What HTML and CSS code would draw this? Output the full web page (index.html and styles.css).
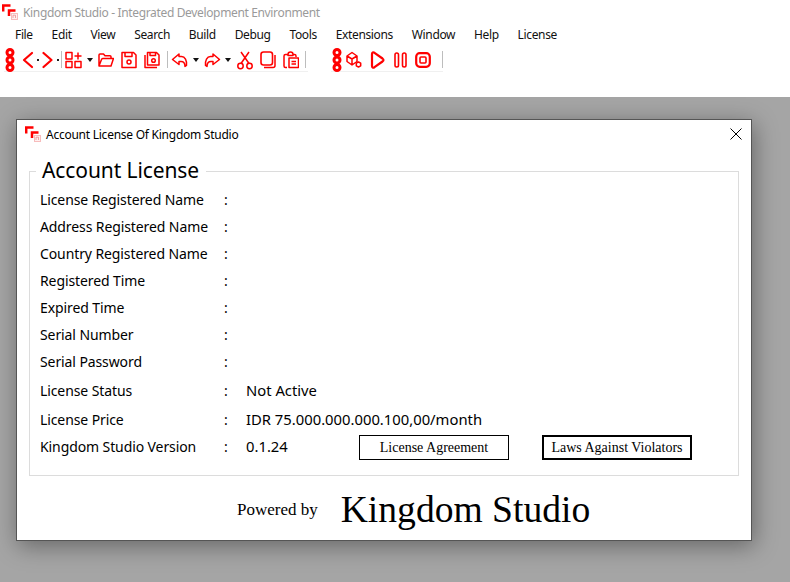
FILE: index.html
```html
<!DOCTYPE html>
<html lang="en">
<head>
<meta charset="utf-8">
<title>Kingdom Studio</title>
<link rel="stylesheet" href="styles.css">
</head>
<body>
<svg class="defs" width="0" height="0" aria-hidden="true">
  <defs>
    <symbol id="logo" viewBox="0 0 16 16">
      <path d="M1.200 7.500V1.600H8.500" fill="none" stroke="#f00" stroke-width="2.500"/>
      <path d="M7 12V6.600H13.500" fill="none" stroke="#f00" stroke-width="2.500"/>
      <rect x="9.500" y="9.500" width="6" height="6" fill="#fff0f0" stroke="#f7bcbc"/>
      <path d="M11 14v-2.800h2.500v2.800" fill="none" stroke="#ec8f8f" stroke-width=".8"/>
    </symbol>
    <symbol id="grip" viewBox="0 0 12 24">
      <g fill="#fff" stroke="#f00" stroke-width="3">
        <circle cx="6" cy="4.500" r="3"/><circle cx="6" cy="12" r="3"/><circle cx="6" cy="19.500" r="3"/>
      </g>
    </symbol>
  </defs>
</svg>
<header class="app">
  <div class="titlebar">
    <svg class="logo" width="16" height="16"><use href="#logo"/></svg>
    <span>Kingdom Studio - Integrated Development Environment</span>
  </div>
  <nav class="menu">
    <span>File</span><span>Edit</span><span>View</span><span>Search</span><span>Build</span><span>Debug</span><span>Tools</span><span>Extensions</span><span>Window</span><span>Help</span><span>License</span>
  </nav>
  <div class="toolbar">
    <div class="tools tools-main">
      <svg class="grip" width="12" height="24"><use href="#grip"/></svg>
      <svg class="ico back" width="12" height="24" viewBox="0 0 12 24"><path d="M10 5L2 12l8 7" class="s"/></svg>
      <i class="dot"></i>
      <svg class="ico fwd" width="12" height="24" viewBox="0 0 12 24"><path d="M1.500 5L9.500 12l-8 7" class="s"/></svg>
      <i class="dot"></i>
      <i class="sep sep-a"></i>
      <svg class="ico grid" width="17" height="24" viewBox="0 0 17 24"><path d="M1 4.500h6v6.500H1zM1 13.500h6v6H1zM10 13.500h6v6h-6zM13 4.500v7M9.500 8H16.500" class="t"/></svg>
      <i class="caret"></i>
      <svg class="ico open" width="16" height="24" viewBox="0 0 16 24"><path d="M1 18V7c0-.7.300-1 1-1h3.500l1.500 1.800h5c.7 0 1 .3 1 1v1.700M1 18l2.500-6.500c.2-.7.500-1 1.200-1H15.500l-2.500 7.500z" class="t"/></svg>
      <svg class="ico save" width="16" height="24" viewBox="0 0 16 24"><path d="M1 4.500h11.500L15 7v12.500H1zM4 4.500v4h7v-4" class="t"/><circle cx="8" cy="14" r="2" class="t"/></svg>
      <svg class="ico saveall" width="16" height="24" viewBox="0 0 16 24"><path d="M3.500 4.500h9L15 7v10H3.500zM1 7v12.500h12M6 4.500v3h5.500v-3" class="t"/><circle cx="9.500" cy="12.500" r="1.800" class="t"/></svg>
      <i class="sep sep-b"></i>
      <svg class="ico undo" width="17" height="24" viewBox="0 0 17 24"><path d="M8 6L1.500 11.500 8 16.500v-3h2c2.500 0 4 1 4 5l1.500-1c.5-5-1.500-9-5-9H8z" class="t"/></svg>
      <i class="caret caret-near"></i>
      <svg class="ico redo" width="17" height="24" viewBox="0 0 17 24"><path d="M9 6l6.500 5.500L9 16.500v-3H7c-2.500 0-4 1-4 5l-1.500-1c-.5-5 1.500-9 5-9H9z" class="t"/></svg>
      <i class="caret caret-far"></i>
      <svg class="ico cut" width="16" height="24" viewBox="0 0 16 24"><path d="M4 4l8 11.500M12 4L4 15.500" class="t"/><circle cx="3.500" cy="18" r="2.700" class="t"/><circle cx="12.500" cy="18" r="2.700" class="t"/></svg>
      <svg class="ico copy" width="16" height="24" viewBox="0 0 16 24"><rect x="1" y="4" width="11.500" height="13" rx="2.500" class="s-thin"/><path d="M15 7v10.500c0 1.500-1 2-2 2H4" class="t"/></svg>
      <svg class="ico paste" width="16" height="24" viewBox="0 0 16 24"><path d="M4 19.500H2.500C1.500 19.500 1 19 1 18V8c0-1 .5-1.500 1.500-1.500H5M10 6.500h1.500c1 0 1.500.5 1.500 1.500v1M5 6.500c0-1.500 1-2.500 2.500-2.500S10 5 10 6.500v1H5zM6 10h9.500v9.500H6zM8.500 13.500h4.500M8.500 16h4.500" class="t"/></svg>
      <i class="sep sep-c"></i>
    </div>
    <div class="tools tools-run">
      <svg class="grip" width="12" height="24"><use href="#grip"/></svg>
      <svg class="ico box" width="16" height="24" viewBox="0 0 16 24"><path d="M1 8l5-3.500L11 8v5.500L6 17l-5-3.500zM1 8l5 3 5-3M6 11v6" class="t"/><path d="M12.500 14l2.200 1.200v2.600L12.500 19l-2.200-1.200v-2.600z" class="t"/></svg>
      <svg class="ico play" width="15" height="24" viewBox="0 0 15 24"><path d="M2 6c0-1.500 1-2 2.500-1.200L12.500 10.500c1.300 1 1.300 2 0 3L4.500 19.200C3 20 2 19.500 2 18z" class="s"/></svg>
      <svg class="ico pause" width="13" height="24" viewBox="0 0 13 24"><rect x="1" y="5" width="3.500" height="14" rx="1.700" class="s-thin"/><rect x="8.500" y="5" width="3.500" height="14" rx="1.700" class="s-thin"/></svg>
      <svg class="ico stop" width="16" height="24" viewBox="0 0 16 24"><rect x="1.200" y="5.200" width="13.600" height="13.600" rx="3.500" class="s"/><rect x="5" y="9" width="6" height="6" rx="1" class="s-thin"/></svg>
      <i class="sep sep-d"></i>
    </div>
  </div>
</header>
<main class="desk">
  <section class="dialog">
    <div class="dialog-title">
      <svg class="logo" width="16" height="16"><use href="#logo"/></svg>
      <span class="dialog-name">Account License Of Kingdom Studio</span>
      <svg class="close" width="12" height="12" viewBox="0 0 12 12"><path d="M.5.500l11 11M11.500.500l-11 11" stroke="#000" fill="none"/></svg>
    </div>
    <fieldset class="license">
      <legend>Account License</legend>
      <div class="row"><span class="key">License Registered Name</span><span class="colon">:</span></div>
      <div class="row"><span class="key">Address Registered Name</span><span class="colon">:</span></div>
      <div class="row"><span class="key">Country Registered Name</span><span class="colon">:</span></div>
      <div class="row"><span class="key">Registered Time</span><span class="colon">:</span></div>
      <div class="row"><span class="key">Expired Time</span><span class="colon">:</span></div>
      <div class="row"><span class="key">Serial Number</span><span class="colon">:</span></div>
      <div class="row"><span class="key">Serial Password</span><span class="colon">:</span></div>
      <div class="row row-tall"><span class="key">License Status</span><span class="colon">:</span><span class="value">Not Active</span></div>
      <div class="row row-tall"><span class="key">License Price</span><span class="colon">:</span><span class="value">IDR 75.000.000.000.100,00/month</span></div>
      <div class="row"><span class="key">Kingdom Studio Version</span><span class="colon">:</span><span class="value version">0.1.24</span>
        <button class="btn" type="button">License Agreement</button>
        <button class="btn btn-focus" type="button">Laws Against Violators</button>
      </div>
    </fieldset>
    <footer class="brand">
      <span class="powered">Powered by</span>
      <span class="brand-name">Kingdom Studio</span>
    </footer>
  </section>
</main>
</body>
</html>
```
FILE: styles.css
```css
* { box-sizing: border-box; }
html, body { margin: 0; height: 100%; }
body {
  width: 790px;
  height: 582px;
  overflow: hidden;
  background: #a5a5a5;
  font-family: "Noto Sans", sans-serif;
  color: #000;
  display: flex;
  flex-direction: column;
}
.defs { position: absolute; }
.app { height: 97px; background: #fff; flex: none; }
.logo { display: block; flex: none; }

.titlebar {
  height: 24px;
  padding-left: 2px;
  display: flex;
  align-items: center;
  gap: 5px;
  font-size: 12px;
  letter-spacing: -.35px;
  color: #9a9a9a;
}
.menu {
  height: 20px;
  padding-left: 15px;
  display: flex;
  align-items: center;
  gap: 18.800px;
  font-size: 12px;
  letter-spacing: -.35px;
  color: #111;
}
.toolbar { height: 26px; margin-top: 4px; padding-left: 4px; display: flex; }
.tools { display: flex; align-items: center; height: 24px; border-bottom: 1px solid #f0f0f0; }
.tools-main { width: 304px; }
.tools-run { margin-left: 23px; }
.grip { display: block; flex: none; }
.ico { display: block; flex: none; }
.s { fill: none; stroke: #f00; stroke-width: 2.200; stroke-linejoin: round; stroke-linecap: round; }
.s-thin { fill: none; stroke: #f00; stroke-width: 1.600; }
.t { fill: none; stroke: #f00; stroke-width: 1.500; stroke-linejoin: round; }
.dot { width: 2px; height: 2px; background: #222; flex: none; margin: 1px 0 0 3px; }
.sep { width: 1px; height: 17px; background: #bdbdbd; flex: none; }
.caret {
  width: 0; height: 0; flex: none;
  border: 3.500px solid transparent;
  border-top: 4px solid #111;
  border-bottom: 0;
  margin-left: 5px;
}
.caret-near { margin-left: 5px; }
.caret-far { margin-left: 4px; }
.back { margin-left: 6px; }
.fwd { margin-left: 3px; }
.sep-a { margin-left: 2px; }
.grid { margin-left: 3px; }
.open { margin-left: 5px; }
.save { margin-left: 7px; }
.saveall { margin-left: 7px; }
.sep-b { margin-left: 7px; }
.undo { margin-left: 3px; }
.redo { margin-left: 5px; }
.cut { margin-left: 6px; }
.copy { margin-left: 7px; }
.paste { margin-left: 7px; }
.sep-c { margin-left: 6px; }
.box { margin-left: 3px; }
.play { margin-left: 8px; }
.pause { margin-left: 9px; }
.stop { margin-left: 8px; }
.sep-d { margin-left: 11px; }

.desk { flex: 1; padding: 22px 0 0 16px; }
.dialog {
  width: 736px;
  height: 422px;
  background: #fff;
  border: 1px solid #555;
  box-shadow: 2px 5px 22px rgba(0, 0, 0, .38);
  display: flex;
  flex-direction: column;
}
.dialog-title {
  height: 28px;
  padding: 0 9px 0 8px;
  display: flex;
  align-items: center;
  font-size: 12px;
  letter-spacing: -.25px;
  flex: none;
}
.dialog-name { margin-left: 5px; flex: 1; }
.close { display: block; }

.license {
  margin: 7px 12px 0 12px;
  padding: 0 0 0 10px;
  height: 321px;
  border: 1px solid #dcdcdc;
  font-size: 14px;
  flex: none;
  min-width: 0;
}
.license legend {
  margin: 0 0 -1px -4px;
  padding: 0 7px 2px 6px;
  font-size: 21px;
  letter-spacing: -.1px;
  line-height: 30px;
}
.row { display: flex; align-items: center; height: 27px; }
.row-tall { height: 29px; padding-top: 2px; }
.key { width: 184px; flex: none; letter-spacing: -.1px; }
.colon { width: 22px; flex: none; }
.value { font-size: 14.800px; margin-top: -1px; }
.version { width: 113px; flex: none; }
.btn {
  width: 150px;
  height: 25px;
  padding: 0;
  flex: none;
  margin-top: 2px;
  background: #fff;
  border: 1px solid #000;
  font-family: "Liberation Serif", serif;
  font-size: 14px;
  color: #000;
}
.btn-focus { margin-left: 33px; border-width: 2px; }

.brand {
  flex: 1;
  display: flex;
  align-items: center;
  padding: 3px 0 0 220px;
  font-family: "Liberation Serif", serif;
}
.powered { font-size: 17px; }
.brand-name { font-size: 37.600px; margin-left: 23px; }
```
